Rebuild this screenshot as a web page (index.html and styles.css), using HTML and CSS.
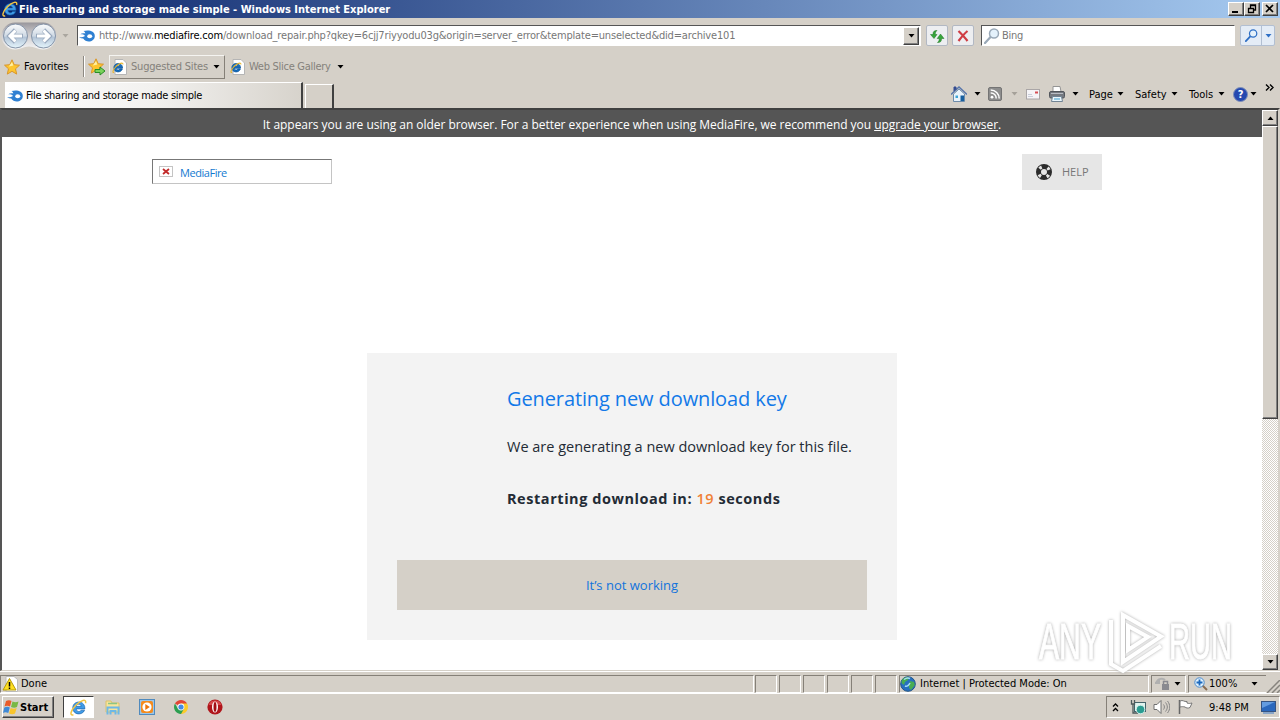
FILE: index.html
```
<!DOCTYPE html>
<html lang="en">
<head>
    <meta charset="UTF-8">
    <title>File sharing and storage made simple</title>
    <link rel="stylesheet" href="styles.css">
</head>
<body>
    <!-- shared icons -->
    <svg class="defs" width="0" height="0">
        <symbol id="ie" viewBox="0 0 16 16">
            <path d="M14 9.300H5.900c.2 3 3.600 3.200 4.600 1.200h3.200C12 15.600 2.700 15.500 2.600 8.400 2.600 1 14.400.6 14 9.300zM5.900 6.900h4.600C10.200 4.200 6.300 4.200 5.900 6.900z" fill="#3f9be8" stroke="#1762a8" stroke-width=".6"/>
            <path d="M3.200 14.800C-.8 16 .8 10.500 5.500 5.800 10 1.200 15.800-.8 14.600 4" fill="none" stroke="#f2c544" stroke-width="1.400"/>
        </symbol>
        <symbol id="ie-page" viewBox="0 0 16 16">
            <path d="M3 .5h8l3.500 3.500v11.500H3z" fill="#fff" stroke="#b5b5b5"/>
            <path d="M10.500 9.200H4.300c.3 2.300 2.900 2.300 3.500.8h2.500C9 14.300 1.900 13.800 1.900 8.700 1.900 3 10.800 3 10.500 9.200zM4.300 7.300h3.700c-.5-1.900-3.200-1.900-3.700 0z" fill="#176fbe" stroke="#0d5499" stroke-width=".8"/>
            <path d="M2 13.500C0 14 1 10.800 4 7.500c3-3 7.200-4.700 7-2" fill="none" stroke="#e8b62e" stroke-width="1.100"/>
        </symbol>
        <symbol id="flame" viewBox="0 0 16 12">
            <path d="M4.500 1C9-.2 15.800.3 15.800 6c0 6.200-8.800 7.300-11.600 2.600C2.900 8.500 1.400 8.100 0 7.300c2.700.2 4.600-.3 6-1.400C4.800 4.600 3 4.200.9 4.400 2.500 3.300 4.600 3.100 6.300 3.500 6.200 2.500 5.600 1.600 4.500 1z" fill="#2f80d2"/>
            <ellipse cx="10.700" cy="6.200" rx="2.500" ry="2" fill="#fff"/>
        </symbol>
        <symbol id="star" viewBox="0 0 16 16">
            <path d="M8 .8l2.200 4.900 5.300.5-4 3.600 1.200 5.300L8 12.300l-4.700 2.800 1.200-5.300-4-3.600 5.300-.5z" fill="#fdc52e" stroke="#d9962a"/>
            <path d="M8 3l1.300 3.600-4.500 1z" fill="#fff1a3"/>
        </symbol>
        <symbol id="arrow" viewBox="0 0 7 4"><path d="M.5 0h6l-3 3.500z" fill="currentColor"/></symbol>
        <symbol id="lens" viewBox="0 0 16 16">
            <path d="M1 15l5.500-6" stroke="currentColor" stroke-width="2.200" stroke-linecap="round"/>
            <circle cx="10" cy="5.500" r="4.500" fill="#e4f1fb" stroke="currentColor" stroke-width="1.500"/>
        </symbol>
    </svg>

    <div class="titlebar">
        <svg class="i16"><use href="#ie"/></svg>
        <span class="title">File sharing and storage made simple - Windows Internet Explorer</span>
        <div class="win-btn"><svg width="10" height="10"><path d="M1 8h6" stroke="#000" stroke-width="2"/></svg></div>
        <div class="win-btn"><svg width="10" height="10"><path d="M3.500 4V1h5v5H6.500M3 1.500h6M1.500 4.500h5v4h-5zM1 4.500h6" fill="none" stroke="#000" stroke-width="1.300"/></svg></div>
        <div class="win-btn close"><svg width="10" height="10"><path d="M1 1l7 7M8 1L1 8" stroke="#000" stroke-width="1.700"/></svg></div>
    </div>

    <div class="nav-row">
        <svg class="travel" width="56" height="28" viewBox="0 0 56 28">
            <path d="M14 .5h28a13 13 0 0 1 0 27c-6 0-8-3-14-3s-8 3-14 3a13 13 0 0 1 0-27z" fill="url(#rim)"/>
            <g stroke="#8594a8">
                <circle cx="14.500" cy="14" r="12" fill="url(#orb)"/>
                <circle cx="42.500" cy="14" r="12" fill="url(#orb)"/>
            </g>
            <g fill="none" stroke="#9aaabf" stroke-width="4.600"><path d="M22 14H10M14.500 8l-6 6 6 6M35 14h12M42.500 8l6 6-6 6"/></g>
            <g fill="none" stroke="#fff" stroke-width="3"><path d="M21 14H10M14.500 8.500L9 14l5.500 5.500M36 14h11M42.500 8.500L48 14l-5.500 5.500"/></g>
            <defs>
                <linearGradient id="orb" x2="0" y2="1"><stop stop-color="#fbfcfd"/><stop offset=".5" stop-color="#cfd9e4"/><stop offset=".55" stop-color="#b3c4d7"/><stop offset="1" stop-color="#e6f6fd"/></linearGradient>
                <linearGradient id="rim" x2="0" y2="1"><stop stop-color="#98969c"/><stop offset=".4" stop-color="#c9c7ca"/><stop offset="1" stop-color="#f6f6f6"/></linearGradient>
            </defs>
        </svg>
        <svg class="arrow recent"><use href="#arrow"/></svg>
        <div class="address">
            <svg class="favicon"><use href="#flame"/></svg>
            <span class="url">http://www.<b>mediafire.com</b>/download_repair.php?qkey=6cjj7riyyodu03g&amp;origin=server_error&amp;template=unselected&amp;did=archive101</span>
            <div class="drop"><svg class="arrow"><use href="#arrow"/></svg></div>
        </div>
        <div class="tool-btn refresh"><svg width="16" height="16"><path d="M8 2.500c-3 0-4 1-4 4H1.500L5 10.500l3-4H6.300c0-2 .2-2.500 1.700-4z" fill="#37a53b" stroke="#1c7421" stroke-width=".5"/><path d="M8.500 14.500c3 0 4-1 4-4H15L11.500 6l-3.300 4.500h2c0 2-.2 2.500-1.700 4z" fill="#37a53b" stroke="#1c7421" stroke-width=".5"/></svg></div>
        <div class="tool-btn stop"><svg width="14" height="14"><path d="M2.500 2c3 3 6 6 9 10M11.500 2c-3 2.500-6 6-9 10" fill="none" stroke="#cf3c43" stroke-width="2.200"/></svg></div>
        <div class="search">
            <svg class="i16"><use href="#lens"/></svg>
            <span>Bing</span>
        </div>
        <div class="search-btn">
            <div class="go"><svg width="13" height="13"><use href="#lens"/></svg></div>
            <div class="more"><svg class="arrow"><use href="#arrow"/></svg></div>
        </div>
    </div>

    <div class="fav-row">
        <svg class="i16"><use href="#star"/></svg>
        <span class="fav-label">Favorites</span>
        <div class="divider"></div>
        <svg class="add-fav" width="18" height="18" viewBox="0 0 18 18"><use href="#star" width="16" height="16"/><path d="M7 11.500h5v-2.500l5 4-5 4v-2.500H7z" fill="#7bd35b" stroke="#2a8d27"/></svg>
        <div class="fav-item raised">
            <svg class="i16"><use href="#ie-page"/></svg>
            <span class="suggested">Suggested Sites</span>
            <svg class="arrow"><use href="#arrow"/></svg>
        </div>
        <div class="fav-item">
            <svg class="i16"><use href="#ie-page"/></svg>
            <span class="slice">Web Slice Gallery</span>
            <svg class="arrow"><use href="#arrow"/></svg>
        </div>
    </div>

    <div class="tab-row">
        <div class="tab">
            <svg class="favicon"><use href="#flame"/></svg>
            <span>File sharing and storage made simple</span>
        </div>
        <div class="new-tab"></div>
        <div class="commands">
            <div class="cmd home"><svg class="i16" viewBox="0 0 16 16"><path d="M2.500 8v7.500h11V8L8 3z" fill="#e9f3fb" stroke="#6d8cab"/><path d="M0 8.500L8 1l8 7.500" fill="none" stroke="#5876ab" stroke-width="1.500"/><path d="M3 5V1h2v2.500" fill="#344c91" stroke="#344c91"/><path d="M9.500 9.500H13V15H9.500z" fill="#175f9f"/><path d="M4.500 9.500h2.500v2.500H4.500z" fill="#3ea5d6"/></svg><svg class="arrow"><use href="#arrow"/></svg></div>
            <div class="cmd rss"><svg width="14" height="14" viewBox="0 0 14 14"><rect x=".5" y=".5" width="13" height="13" rx="1.500" fill="#8d8d8d" stroke="#747474"/><circle cx="4" cy="10.200" r="1.400" fill="#fff"/><path d="M2.700 6a5.200 5.200 0 0 1 5.500 5.500M2.700 3a8.500 8.500 0 0 1 8.500 8.500" fill="none" stroke="#fff" stroke-width="1.500"/></svg><svg class="arrow"><use href="#arrow"/></svg></div>
            <div class="cmd mail"><svg width="14" height="11"><rect x=".5" y=".5" width="13" height="9.500" fill="#f5f4f7" stroke="#aaa6a7"/><path d="M9 2.500h3v2H9z" fill="#d74e54"/><path d="M2 5.500h4M2 7.500h5" stroke="#c9cdd9"/></svg></div>
            <div class="cmd print"><svg class="i16" viewBox="0 0 16 16"><path d="M4 .5h7l1 5H4z" fill="#fff" stroke="#949494"/><rect x=".5" y="5.500" width="15" height="6.500" rx="1.500" fill="#757980" stroke="#52565c"/><path d="M2 7.500h12" stroke="#b9bdc4"/><path d="M3.500 10.500h9l1 5h-11z" fill="#eaf6fc" stroke="#718494"/><path d="M5 13h6" stroke="#3f9fce"/></svg><svg class="arrow"><use href="#arrow"/></svg></div>
            <div class="cmd page-menu"><span>Page</span><svg class="arrow"><use href="#arrow"/></svg></div>
            <div class="cmd safety"><span>Safety</span><svg class="arrow"><use href="#arrow"/></svg></div>
            <div class="cmd tools"><span>Tools</span><svg class="arrow"><use href="#arrow"/></svg></div>
            <div class="cmd help-menu"><div class="q">?</div><svg class="arrow"><use href="#arrow"/></svg></div>
            <svg class="chevron" width="9" height="7"><path d="M1 .5l3 3-3 3M5 .5l3 3-3 3" fill="none" stroke="#000" stroke-width="1.400"/></svg>
        </div>
    </div>

    <div class="viewport">
        <div class="page">
            <div class="banner"><span>It appears you are using an older browser. For a better experience when using MediaFire, we recommend you <a>upgrade your browser</a>.</span></div>
            <div class="header">
                <div class="logo">
                    <svg width="14" height="11"><rect x=".5" y=".5" width="13" height="10" fill="#fff" stroke="#c4c4c4"/><path d="M4 3l6 5M10 3L4 8" stroke="#c22a2a" stroke-width="1.800"/></svg>
                    <span>MediaFire</span>
                </div>
                <div class="help">
                    <svg width="16" height="16"><circle cx="8" cy="8" r="5.500" fill="none" stroke="#2b2b2b" stroke-width="5"/><circle cx="8" cy="8" r="5.500" fill="none" stroke="#e6e6e6" stroke-width="3.200" stroke-dasharray="2.600 6.040" stroke-dashoffset="-3.020"/></svg>
                    <span>HELP</span>
                </div>
            </div>
            <div class="card">
                <h1><span>Generating new download key</span></h1>
                <p class="msg"><span>We are generating a new download key for this file.</span></p>
                <p class="count"><span>Restarting download in: <em>19</em> seconds</span></p>
                <div class="not-working"><span>It’s not working</span></div>
            </div>
        </div>
        <div class="scrollbar">
            <div class="sb-btn up"><svg class="arrow"><use href="#arrow"/></svg></div>
            <div class="thumb"></div>
            <div class="sb-btn down"><svg class="arrow"><use href="#arrow"/></svg></div>
        </div>
    </div>

    <div class="statusbar">
        <div class="pane done">
            <svg class="i16" viewBox="0 0 16 16"><path d="M4 .5h8l3.500 3v12H4z" fill="#fff" stroke="#bbb"/><path d="M7.500 2.500L14 14H1z" fill="#ffdf20" stroke="#b59a0a"/><path d="M7.500 6v4.500M7.500 11.500V13" stroke="#000" stroke-width="1.500"/></svg>
            <span>Done</span>
        </div>
        <div class="pane small"></div>
        <div class="pane small"></div>
        <div class="pane small"></div>
        <div class="pane small"></div>
        <div class="pane small"></div>
        <div class="pane small"></div>
        <div class="pane zone">
            <svg class="i16" viewBox="0 0 16 16"><circle cx="8" cy="8" r="7.300" fill="#2770bf" stroke="#215487"/><path d="M2 4c2-3 5-3 7-3L8 4 5 6 4 9 1.500 7zM10 5l4 1 .8 3L11 14l-2-2V9z" fill="#48ad52"/><path d="M4 3.500c2-1.500 4-2 6-1M5 10c2 1 4-1 5-3" stroke="#a5ddf5" stroke-width="1.500" fill="none"/></svg>
            <span>Internet | Protected Mode: On</span>
        </div>
        <div class="pane privacy">
            <svg class="i16" viewBox="0 0 16 16"><path d="M1 7c2-5 7-5 9-3M0 7h4V3" stroke="#b0b0b0" stroke-width="2" fill="none"/><rect x="7" y="8" width="7" height="6" fill="#8a8a90"/><path d="M8.500 8V5.500h4V8" stroke="#8a8a90" fill="none" stroke-width="1.500"/></svg>
            <svg class="arrow"><use href="#arrow"/></svg>
        </div>
        <div class="pane zoom">
            <svg width="14" height="14" viewBox="0 0 14 14"><path d="M8.500 8.500L13 13" stroke="#8a6c50" stroke-width="2"/><circle cx="5.500" cy="5.500" r="4.700" fill="#dff0fc" stroke="#4b8bce"/><path d="M5.500 2.500v6M2.500 5.500h6" stroke="#1c68bd" stroke-width="1.800"/></svg>
            <span>100%</span>
            <svg class="arrow"><use href="#arrow"/></svg>
        </div>
        <svg class="grip" width="13" height="13"><path d="M0 13L13 0M5 13l8-8M10 13l3-3" stroke="#86837d" stroke-width="1.500"/></svg>
    </div>

    <div class="taskbar">
        <div class="start">
            <svg width="17" height="16" viewBox="0 0 17 16"><path d="M3 2c2-1 4-1 5.500 0L7 7.500c-2-1-4-.8-5.500 0z" fill="#e95b29"/><path d="M9.500 2.500c2 1 4 1 6 0L14 8c-2 1-4 .8-6 0z" fill="#79b844"/><path d="M1.300 8.500c2-1 4-1 5.500 0L5.300 14c-2-1-4-.8-5.300 0z" fill="#3e89d6"/><path d="M7.700 9c2 1 4 1 6 0L12 14.500c-2 1-4 .8-6 0z" fill="#f8c52d"/></svg>
            <span>Start</span>
        </div>
        <div class="task active"><svg width="17" height="17"><use href="#ie"/></svg></div>
        <div class="task"><svg class="i16" viewBox="0 0 16 16"><path d="M1 2h5l1 2h7v9H1z" fill="#f7e59b" stroke="#dcc26a"/><path d="M3 4.500h9" stroke="#8cc583" stroke-width="1.500"/><path d="M2.500 15.500V8.500h11v7M5.500 15.500V12h5v3.500" fill="none" stroke="#6db8e6" stroke-width="2"/></svg></div>
        <div class="task"><svg class="i16" viewBox="0 0 16 16"><rect x=".5" y=".5" width="15" height="15" fill="#9bc6e9" stroke="#508abd"/><rect x="2" y="2" width="12" height="12" rx="2" fill="#f58b1d"/><circle cx="8" cy="8" r="4.600" fill="#fff"/><path d="M6.300 5v6l4.500-3z" fill="#ec750b"/></svg></div>
        <div class="task"><svg width="14" height="14" viewBox="0 0 14 14"><path d="M7 7L.94 3.500A7 7 0 0 1 13.060 3.500z" fill="#e14536"/><path d="M7 7V3.500h6.060A7 7 0 0 1 7 14z" fill="#fbcb2b"/><path d="M7 7l3 1.800L7 14A7 7 0 0 1 .94 3.500L4 8.800z" fill="#2c9e50"/><circle cx="7" cy="7" r="3.400" fill="#fff"/><circle cx="7" cy="7" r="2.600" fill="#438be5"/></svg></div>
        <div class="task opera"><svg class="i16" viewBox="0 0 16 16"><circle cx="8" cy="8" r="7.600" fill="#b0151b"/><path d="M1.500 6a7 7 0 0 1 13 0z" fill="#d6484b"/><ellipse cx="8" cy="8" rx="3" ry="5.600" fill="#fff"/><ellipse cx="8" cy="8" rx="1.500" ry="4.900" fill="#a30d14"/></svg></div>
        <div class="tray">
            <svg class="up-chev" width="7" height="9"><path d="M1 3.500l2.500-2.500L6 3.500M1 8l2.500-2.500L6 8" fill="none" stroke="#000" stroke-width="1.300"/></svg>
            <svg class="net" width="16" height="16"><rect x="4.500" y="3.500" width="11" height="9" fill="#dff3ee" stroke="#43636a"/><path d="M1.500 1v4h3V1M3 5v9h5" fill="none" stroke="#4d5a5c" stroke-width="1.300"/><circle cx="10.500" cy="10.500" r="4.300" fill="#2b9c91" stroke="#d5efeb"/></svg>
            <svg class="vol" width="17" height="16"><path d="M1 5.500h3L8 1.500v13l-4-4H1z" fill="#fff" stroke="#707070"/><path d="M10.500 5.500c1.200 1.500 1.200 3.500 0 5M12.500 3.500c2.400 3 2.400 6 0 9M14.500 2c3 4 3 8 0 12" fill="none" stroke="#858585"/></svg>
            <svg class="flag" width="17" height="16"><path d="M2.500 1v14" stroke="#666" stroke-width="1.500"/><path d="M3 2c3-1.500 4 1 7 .5V4c2 .8 3 .5 5 0l-2 4.500c-2 1-4 .5-5-.5-2-.5-3-.5-5 0z" fill="#fff" stroke="#777"/></svg>
            <span>9:48 PM</span>
            <svg class="desk" width="15" height="13"><rect x=".5" y=".5" width="14" height="10" fill="#2b68bd" stroke="#365482"/><path d="M1 1h13L1 7z" fill="#649ce0"/><path d="M2 12h11" stroke="#88a5c8" stroke-width="2"/></svg>
        </div>
    </div>

    <svg class="watermark" width="202" height="70" viewBox="0 0 202 70">
        <text x="4" y="53" textLength="62" lengthAdjust="spacingAndGlyphs">ANY</text>
        <path d="M88 9v47l38-25.500zM76 14v44l12 7 38-25M93 20v24l20-13z"/>
        <text x="134" y="53" textLength="63" lengthAdjust="spacingAndGlyphs">RUN</text>
    </svg>
</body>
</html>
```
FILE: styles.css
```
* {
    box-sizing: border-box;
}
body {
    display: flex;
    flex-direction: column;
    width: 1280px;
    height: 720px;
    margin: 0;
    overflow: hidden;
    background-color: #d5d0c8;
    font-family: "DejaVu Sans Condensed", "DejaVu Sans", sans-serif;
    font-stretch: condensed;
    font-size: 11px;
    line-height: 14px;
    color: #000;
    white-space: nowrap;
}
svg {
    display: block;
    flex: none;
}
.defs {
    position: absolute;
}
.i16 {
    width: 16px;
    height: 16px;
}
.arrow {
    width: 7px;
    height: 4px;
}
.favicon {
    width: 16px;
    height: 12px;
}

/* title bar */
.titlebar {
    display: flex;
    align-items: center;
    height: 18px;
    padding: 0 2px 0 2px;
    background: linear-gradient(to right, #0a246a, #a6caf0);
}
.title {
    flex: 1;
    margin-left: 1px;
    padding-top: 1px;
    color: #fff;
    font-weight: bold;
}
.win-btn, .drop, .sb-btn, .thumb, .start {
    border: 1px solid;
    border-color: #fff #404040 #404040 #fff;
    box-shadow: inset -1px -1px #808080;
    background-color: #d5d0c8;
}
.win-btn {
    width: 16px;
    height: 14px;
    padding: 1px 0 0 2px;
}
.win-btn.close {
    margin-left: 2px;
}

/* address row */
.nav-row {
    display: flex;
    align-items: center;
    height: 35px;
    padding-left: 1px;
}
.recent {
    margin: 0 8px 0 5px;
    color: #aaa69f;
}
.address, .search {
    display: flex;
    align-items: center;
    height: 21px;
    border: 1px solid;
    border-color: #555 #fff #fff #555;
    background-color: #fff;
    color: #777;
}
.address {
    width: 844px;
    padding: 0 1px;
}
.url {
    flex: 1;
    margin-left: 4px;
    padding-top: 1px;
    letter-spacing: -0.17px;
}
.url b {
    font-weight: normal;
    color: #000;
}
.drop {
    display: flex;
    align-items: center;
    justify-content: center;
    width: 16px;
    height: 18px;
    color: #000;
}
.tool-btn {
    display: flex;
    align-items: center;
    justify-content: center;
    width: 22px;
    height: 21px;
    border: 1px solid #b2b8c3;
    border-radius: 2px;
    background-color: #edeef1;
}
.refresh {
    margin: 0 4px 0 5px;
}
.search {
    width: 254px;
    margin-left: 7px;
    padding-left: 2px;
}
.search svg {
    color: #9aa9b8;
}
.search span {
    margin-left: 2px;
    padding-top: 1px;
    letter-spacing: -0.3px;
}
.search-btn {
    display: flex;
    width: 35px;
    height: 21px;
    margin-left: 5px;
    border: 1px solid #b2bfd2;
    border-radius: 2px;
    background-color: #e4ecf6;
    color: #2e6fc5;
}
.go, .more {
    display: flex;
    align-items: center;
    justify-content: center;
}
.go {
    width: 21px;
    border-right: 1px solid #b2bfd2;
}
.more {
    flex: 1;
}

/* favorites bar */
.fav-row {
    display: flex;
    align-items: center;
    height: 27px;
    padding-left: 4px;
}
.fav-label {
    width: 59px;
    margin-left: 4px;
}
.divider {
    width: 2px;
    height: 21px;
    border-left: 1px solid #8d8982;
    border-right: 1px solid #fff;
}
.add-fav {
    margin: 0 3px 0 3px;
}
.fav-item {
    display: flex;
    align-items: center;
    height: 24px;
    padding-left: 2px;
    border: 1px solid transparent;
    color: #84817b;
}
.fav-item span {
    padding-top: 1px;
}
.fav-item .arrow {
    color: #000;
}
.raised {
    width: 116px;
    margin-right: 2px;
    border-color: #f5f4f1 #858078 #858078 #f5f4f1;
}
.suggested {
    width: 82px;
    margin-left: 3px;
    letter-spacing: -0.2px;
}
.slice {
    width: 88px;
    margin-left: 3px;
    letter-spacing: -0.28px;
}

/* tabs and command bar */
.tab-row {
    display: flex;
    align-items: flex-end;
    height: 28px;
    padding-left: 5px;
}
.tab {
    display: flex;
    align-items: center;
    width: 298px;
    height: 26px;
    padding-left: 2px;
    border-top: 1px solid #fff;
    border-right: 2px solid #404040;
    background: linear-gradient(to right, #fff, #f2f1ef 50%, #d7d3cc);
}
.tab span {
    margin-left: 3px;
    padding-top: 1px;
    letter-spacing: -0.28px;
}
.new-tab {
    width: 29px;
    height: 24px;
    margin-left: 2px;
    border-top: 1px solid #fff;
    border-left: 1px solid #fff;
    border-right: 2px solid #404040;
}
.commands {
    display: flex;
    align-items: center;
    height: 28px;
    margin-left: 617px;
}
.cmd {
    display: flex;
    align-items: center;
}
.cmd span {
    padding-top: 1px;
}
.home {
    width: 37px;
    gap: 7px;
}
.rss {
    width: 38px;
    gap: 9px;
}
.rss .arrow {
    color: #a5a19a;
}
.mail {
    width: 23px;
}
.print {
    width: 40px;
    gap: 7px;
}
.page-menu {
    width: 46px;
}
.page-menu span {
    width: 28px;
}
.safety {
    width: 54px;
}
.safety span {
    width: 36px;
}
.tools {
    width: 44px;
}
.tools span {
    width: 29px;
}
.help-menu {
    width: 32px;
    gap: 2px;
}
.q {
    width: 15px;
    height: 15px;
    border: 1px solid #7e8fb8;
    border-radius: 50%;
    background-color: #2549b0;
    color: #fff;
    font-weight: bold;
    line-height: 13px;
    text-align: center;
}
.chevron {
    margin-bottom: 13px;
}

/* page */
.viewport {
    display: flex;
    height: 563px;
    border-top: 2px solid #404040;
    border-left: 2px solid #555;
    border-right: 2px solid #d5d0c8;
    border-bottom: 1px solid #d5d0c8;
    background-color: #fff;
}
.page {
    width: 1260px;
    font-family: "Open Sans", sans-serif;
    font-stretch: normal;
}
.banner {
    height: 27px;
    background-color: #555;
    color: #fff;
    font-size: 12px;
    letter-spacing: -0.04px;
    line-height: 29px;
    text-align: center;
}
.banner a {
    text-decoration: underline;
}
.header {
    display: flex;
    justify-content: space-between;
    align-items: flex-start;
    height: 216px;
    padding: 17px 160px 0 150px;
}
.logo {
    display: flex;
    align-items: center;
    gap: 7px;
    width: 180px;
    height: 25px;
    margin-top: 5px;
    padding-left: 6px;
    border: 1px solid;
    border-color: #777 #c4c4c4 #c4c4c4 #777;
    color: #1279d0;
}
.logo span {
    padding-top: 2px;
    letter-spacing: -0.45px;
}
.help {
    display: flex;
    align-items: center;
    gap: 10px;
    width: 80px;
    height: 36px;
    padding-left: 14px;
    background-color: #e6e6e6;
    color: #777;
}
.card {
    width: 530px;
    height: 287px;
    margin-left: 365px;
    padding: 30px 30px 0;
    background-color: #f3f3f3;
    color: #232b35;
}
.card h1, .card p {
    margin: 0 0 0 110px;
}
.card h1 {
    height: 48px;
    color: #1279e8;
    font-size: 20px;
    font-weight: normal;
    letter-spacing: -0.11px;
    line-height: 32px;
}
.msg, .count {
    height: 52px;
    font-size: 14.5px;
    line-height: 32px;
}
.count {
    font-weight: bold;
    letter-spacing: 0.55px;
}
.count em {
    color: #f08035;
    font-style: normal;
    font-weight: 600;
}
.not-working {
    height: 50px;
    margin-top: 25px;
    background-color: #d5d0c8;
    color: #1273dc;
    font-size: 13px;
    line-height: 50px;
    text-align: center;
}
.scrollbar {
    display: flex;
    flex-direction: column;
    width: 16px;
    background: repeating-conic-gradient(#fff 0 25%, #d5d0c8 0 50%) 0 0 / 2px 2px;
}
.sb-btn {
    display: flex;
    align-items: center;
    justify-content: center;
    height: 16px;
}
.up svg {
    transform: scaleY(-1);
}
.thumb {
    height: 293px;
}
.down {
    margin-top: auto;
}

/* status bar */
.statusbar {
    display: flex;
    height: 23px;
    padding-top: 3px;
    border-top: 1px solid #fff;
    border-bottom: 1px solid #fff;
}
.pane {
    display: flex;
    align-items: center;
    height: 18px;
    border: 1px solid;
    border-color: #858078 #fff #fff #858078;
}
.done {
    width: 754px;
    margin-right: 1px;
    padding-left: 1px;
}
.done span {
    margin-left: 3px;
}
.small {
    width: 22px;
    margin-right: 2px;
}
.zone {
    width: 250px;
    margin-right: 2px;
}
.zone span {
    margin-left: 4px;
}
.privacy {
    width: 35px;
    gap: 3px;
    margin-right: 2px;
    padding-left: 3px;
}
.zoom {
    width: 78px;
    padding-left: 5px;
    border-right: none;
}
.zoom span {
    width: 42px;
    margin-left: 1px;
}
.grip {
    margin: 5px 0 0 1px;
}

/* taskbar */
.taskbar {
    display: flex;
    align-items: center;
    height: 26px;
}
.start {
    display: flex;
    align-items: center;
    width: 52px;
    height: 22px;
    margin: 0 9px 0 2px;
    font-weight: bold;
}
.start span {
    padding-top: 1px;
}
.task {
    display: flex;
    align-items: center;
    justify-content: center;
    width: 34px;
}
.task.active {
    width: 31px;
    height: 22px;
    border: 1px solid;
    border-color: #404040 #fff #fff #404040;
    background-color: #fff;
    margin-right: 2px;
}
.tray {
    display: flex;
    align-items: center;
    width: 174px;
    height: 22px;
    margin-left: auto;
    padding-left: 5px;
    border: 1px solid;
    border-color: #858078 #fff #fff #858078;
}
.net {
    margin-left: 11px;
}
.vol {
    margin-left: 7px;
}
.flag {
    margin-left: 7px;
}
.tray span {
    width: 52px;
    margin-left: 15px;
    padding-top: 1px;
}

/* watermark */
.watermark {
    position: absolute;
    left: 1035px;
    top: 606px;
    fill: #fff;
    font-family: "Liberation Sans", sans-serif;
    font-size: 50px;
    filter: drop-shadow(0 0 1.5px #aaa);
}
.watermark path {
    fill: none;
    stroke: #fff;
    stroke-width: 4;
}
.watermark text {
    stroke: #fff;
}
```
